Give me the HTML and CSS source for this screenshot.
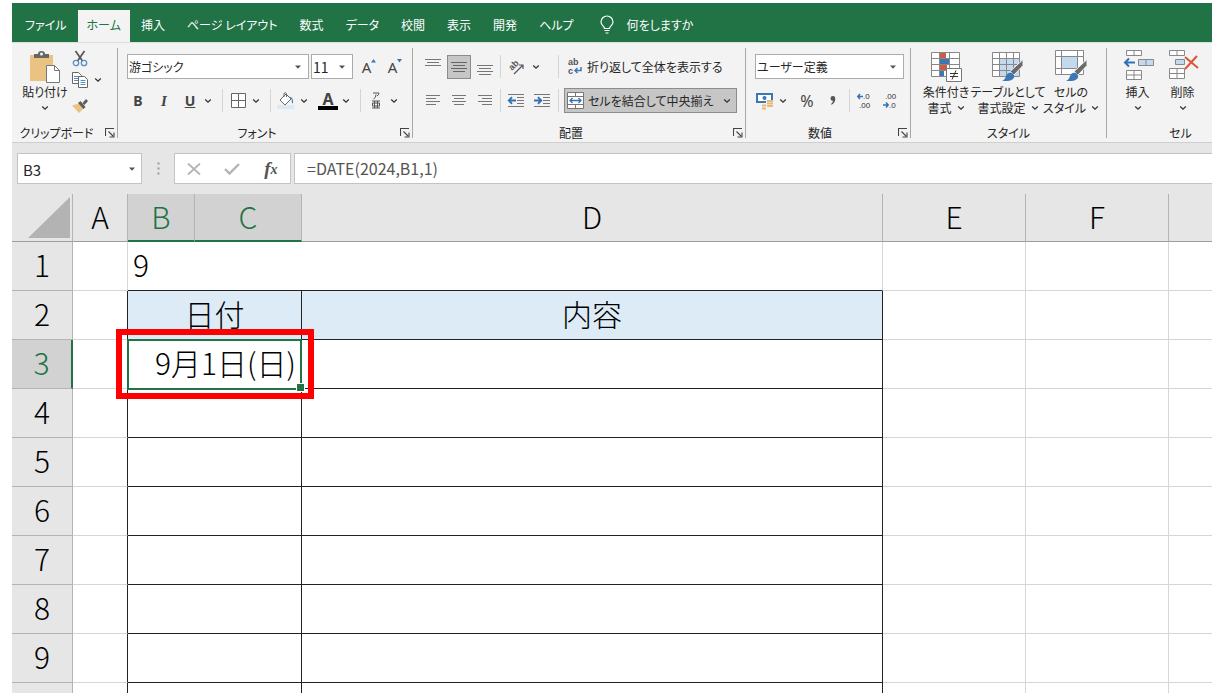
FILE: index.html
```html
<!DOCTYPE html>
<html lang="ja">
<head>
<meta charset="utf-8">
<title>B3 - 表計算</title>
<link rel="stylesheet" href="styles.css">
</head>
<body>
<svg class="defs" aria-hidden="true">
  <symbol id="chev" viewBox="0 0 8 8"><path d="M1.2 2.6 4 5.2 6.8 2.6" fill="none" stroke="#333" stroke-width="1.3"/></symbol>
  <symbol id="tri" viewBox="0 0 8 8"><path d="M1 2.5h6L4 5.8z" fill="#555"/></symbol>
  <symbol id="launch" viewBox="0 0 10 10"><path d="M.5 8V.5H9M3.5 3.5 8 8M4.5 9h4.5V4.5" fill="none" stroke="#444" stroke-width="1.1"/></symbol>
</svg>
<div class="app">
  <nav class="tabs">
    <button class="tab">ファイル</button>
    <button class="tab active">ホーム</button>
    <button class="tab">挿入</button>
    <button class="tab">ページ レイアウト</button>
    <button class="tab">数式</button>
    <button class="tab">データ</button>
    <button class="tab">校閲</button>
    <button class="tab">表示</button>
    <button class="tab">開発</button>
    <button class="tab">ヘルプ</button>
    <button class="tab tell">
      <svg width="14" height="18" viewBox="0 0 14 18"><path d="M4.5 12.5C4.5 10 1 9.500 1 6a6 6 0 0 1 12 0c0 3.500-3.500 4-3.500 6.500zM4.500 14.500h5M5.500 17h3" fill="none" stroke="#fff" stroke-width="1.2"/></svg>
      <span>何をしますか</span>
    </button>
  </nav>

  <div class="ribbon">
    <section class="group clipboard">
      <div class="body side">
        <button class="big paste">
          <svg width="32" height="34" viewBox="0 0 32 34"><path d="M1 5h23v26H1z" fill="#eac282"/><path d="M5 4h4q0-3 3.500-3T16 4h4v4H5z" fill="#666"/><circle cx="12.500" cy="4" r="1.500" fill="#f3f3f3"/><path d="M17.500 15.500h8l5 5v12h-13z" fill="#fff" stroke="#777"/><path d="M25.500 15.500v5h5" fill="none" stroke="#777"/></svg>
          <span>貼り付け</span>
          <svg class="chev"><use href="#chev"/></svg>
        </button>
        <div class="stack">
          <button class="icon cut" aria-label="切り取り"><svg width="16" height="17" viewBox="0 0 16 17"><path d="M3.500 1 10.500 11M12.500 1 5.500 11" stroke="#555" stroke-width="1.700"/><circle cx="4" cy="13" r="2.700" fill="none" stroke="#5b8fc0" stroke-width="1.300"/><circle cx="12" cy="13" r="2.700" fill="none" stroke="#5b8fc0" stroke-width="1.300"/></svg></button>
          <span class="split">
            <button class="icon" aria-label="コピー"><svg width="16" height="16" viewBox="0 0 16 16"><path d="M.5.5h6l3 3v8h-9z" fill="#fff" stroke="#666"/><path d="M2 4.500h5M2 6.500h5M2 8.500h5" stroke="#5b8fc0"/><path d="M6.500 4.500h6l3 3v8h-9z" fill="#fff" stroke="#666"/><path d="M8.500 8.500h5M8.500 10.500h5M8.500 12.500h5" stroke="#5b8fc0"/></svg></button>
            <button class="more" aria-label="コピーのオプション"><svg class="chev"><use href="#chev"/></svg></button>
          </span>
          <button class="icon" aria-label="書式のコピー"><svg width="16" height="14" viewBox="0 0 16 14"><path d="m0 6.500 7-2 4.500 5L7 14z" fill="#eac282"/><path d="m6 4 2.500-2 5 6-2 2zM10.500 4l3.500-4 2 2-3.500 4z" fill="#5c5c5c"/></svg></button>
        </div>
      </div>
      <div class="label"><span>クリップボード</span><button class="launcher" aria-label="クリップボードの詳細"><svg width="10" height="10"><use href="#launch"/></svg></button></div>
    </section>

    <section class="group font">
      <div class="body">
        <div class="row fields">
          <span class="pick name"><select aria-label="フォント名"><option>游ゴシック</option></select><svg class="tri"><use href="#tri"/></svg></span>
          <span class="pick size"><select aria-label="フォント サイズ"><option>11</option></select><svg class="tri"><use href="#tri"/></svg></span>
          <button class="icon grow first" aria-label="拡大">A<svg width="5" height="4" viewBox="0 0 5 4"><path d="M0 3.500 2.500 0 5 3.500z" fill="#3b78b5"/></svg></button>
          <button class="icon grow" aria-label="縮小">A<svg width="5" height="4" viewBox="0 0 5 4"><path d="M0 0 2.500 3.500 5 0z" fill="#3b78b5"/></svg></button>
        </div>
        <div class="row">
          <button class="icon bold">B</button>
          <button class="icon italic">I</button>
          <span class="split"><button class="icon under">U</button><button class="more" aria-label="下線"><svg class="chev"><use href="#chev"/></svg></button></span>
          <i class="sep"></i>
          <span class="split"><button class="icon" aria-label="罫線"><svg width="15" height="15" viewBox="0 0 15 15"><path d="M.5.5h14v14H.5zM7.500.5v14M.5 7.500h14" fill="#fff" stroke="#666"/></svg></button><button class="more" aria-label="罫線の種類"><svg class="chev"><use href="#chev"/></svg></button></span>
          <i class="sep"></i>
          <span class="split"><button class="icon" aria-label="塗りつぶしの色"><svg width="18" height="18" viewBox="0 0 18 18"><path d="M0 13h17v4H0z" fill="#dbe9f5"/><path d="m3 8 6-6 5 5-6 6zM7 5V1.500q1.500-1.500 2.500 0V5" fill="#fff" stroke="#666"/><path d="M12.500 4.500q4 .5 3.500 7-2-1-1-3.500z" fill="#3f7dba"/></svg></button><button class="more" aria-label="色の選択"><svg class="chev"><use href="#chev"/></svg></button></span>
          <span class="split"><button class="icon color" aria-label="フォントの色">A</button><button class="more" aria-label="文字色の選択"><svg class="chev"><use href="#chev"/></svg></button></span>
          <i class="sep"></i>
          <span class="split"><button class="icon ruby" aria-label="ふりがな"><svg width="10" height="17" viewBox="0 0 10 17"><path d="M2 1h6Q8 3 6 4M5 2.500Q5 6 2.500 7" fill="none" stroke="#555"/><path d="M1 9h8M1 16h8M3.500 9v7M6.500 9v7M1.500 11h7v3h-7z" fill="none" stroke="#555"/></svg></button><button class="more" aria-label="ふりがなの設定"><svg class="chev"><use href="#chev"/></svg></button></span>
        </div>
      </div>
      <div class="label"><span>フォント</span><button class="launcher" aria-label="フォントの詳細"><svg width="10" height="10"><use href="#launch"/></svg></button></div>
    </section>

    <section class="group align">
      <div class="body">
        <div class="row">
          <button class="icon" aria-label="上揃え"><svg width="16" height="16" viewBox="0 0 16 16"><path d="M0 .5h16M2 3.500h12M0 6.500h16" stroke="#777"/></svg></button>
          <button class="icon on" aria-label="上下中央揃え"><svg width="16" height="16" viewBox="0 0 16 16"><path d="M0 3.500h16M2 6.500h12M0 9.500h16M2 12.500h12" stroke="#666"/></svg></button>
          <button class="icon" aria-label="下揃え"><svg width="16" height="16" viewBox="0 0 16 16"><path d="M0 6.500h16M2 9.500h12M0 12.500h16M2 15.500h12" stroke="#777"/></svg></button>
          <i class="sep"></i>
          <span class="split orient"><button class="icon" aria-label="方向"><svg width="18" height="18" viewBox="0 0 18 18"><text transform="translate(5 13) rotate(-45)" class="glyph">ab</text><path d="M7 16 16 7M12 7H16v4" fill="none" stroke="#555" stroke-width="1.200"/></svg></button><button class="more" aria-label="方向の選択"><svg class="chev"><use href="#chev"/></svg></button></span>
          <i class="sep wide"></i>
          <button class="wrap"><svg width="16" height="17" viewBox="0 0 16 17"><text x="1" y="7" class="glyph">ab</text><text x="1" y="16" class="glyph">c</text><path d="M14 9v3.500H8M10.500 10 8 12.500l2.500 2.500" fill="none" stroke="#3b78b5" stroke-width="1.500"/></svg><span>折り返して全体を表示する</span></button>
        </div>
        <div class="row">
          <button class="icon" aria-label="左揃え"><svg width="14" height="11" viewBox="0 0 14 11"><path d="M0 .5h14M0 3.500h10M0 6.500h14M0 9.500h10" stroke="#777"/></svg></button>
          <button class="icon" aria-label="中央揃え"><svg width="14" height="11" viewBox="0 0 14 11"><path d="M0 .5h14M2 3.500h10M0 6.500h14M2 9.500h10" stroke="#777"/></svg></button>
          <button class="icon" aria-label="右揃え"><svg width="14" height="11" viewBox="0 0 14 11"><path d="M0 .5h14M4 3.500h10M0 6.500h14M4 9.500h10" stroke="#777"/></svg></button>
          <i class="sep"></i>
          <button class="icon" aria-label="インデントを減らす"><svg width="16" height="14" viewBox="0 0 16 14"><path d="M0 .5h16M9 3.500h7M9 6.500h7M9 9.500h7M0 12.500h16" stroke="#777"/><path d="M8 6.500H1M4 3.200.8 6.500 4 9.800" fill="none" stroke="#3073b5" stroke-width="1.900"/></svg></button>
          <button class="icon" aria-label="インデントを増やす"><svg width="16" height="14" viewBox="0 0 16 14"><path d="M0 .5h16M9 3.500h7M9 6.500h7M9 9.500h7M0 12.500h16" stroke="#777"/><path d="M0 6.500h7M4 3.200l3.200 3.300L4 9.800" fill="none" stroke="#3073b5" stroke-width="1.900"/></svg></button>
          <i class="sep wide"></i>
          <button class="merge"><svg width="17" height="17" viewBox="0 0 17 17"><path d="M.5.5h16v16H.5zM.5 4.500h16M.5 12.500h16M8.500.5v4M8.500 12.500v4" fill="#fff" stroke="#777"/><path d="M3 8.500h11M5.500 6 3 8.500 5.500 11M11.500 6 14 8.500 11.500 11" fill="none" stroke="#3073b5" stroke-width="1.300"/></svg><span>セルを結合して中央揃え</span><svg class="chev"><use href="#chev"/></svg></button>
        </div>
      </div>
      <div class="label"><span>配置</span><button class="launcher" aria-label="配置の詳細"><svg width="10" height="10"><use href="#launch"/></svg></button></div>
    </section>

    <section class="group number">
      <div class="body">
        <div class="row fields">
          <span class="pick format"><select aria-label="表示形式"><option>ユーザー定義</option></select><svg class="tri"><use href="#tri"/></svg></span>
        </div>
        <div class="row">
          <span class="split"><button class="icon" aria-label="通貨"><svg width="18" height="18" viewBox="0 0 18 18"><path d="M1 2h15v8H1z" fill="#fff" stroke="#3b78b5" stroke-width="2"/><circle cx="8.500" cy="6" r="2" fill="#3b78b5"/><path d="M10 8h7v9h-5v1H6v-6h4z" fill="#f3f3f3"/><path d="M11 9h6M11 11.500h6M11 14h6M6 13.500h4M6 16.500h4" stroke="#e5b97a" stroke-width="2"/></svg></button><button class="more" aria-label="通貨の選択"><svg class="chev"><use href="#chev"/></svg></button></span>
          <button class="icon percent">%</button>
          <button class="icon" aria-label="桁区切り"><svg width="6" height="9" viewBox="0 0 6 9"><path d="M.5 2.500a2.300 2.300 0 0 1 4.800 0Q5.300 7 1.500 8.800L1 8q2-1.500 2-3.300A2.300 2.300 0 0 1 .5 2.500z" fill="#555"/></svg></button>
          <i class="sep"></i>
          <button class="icon" aria-label="小数点以下を増やす"><svg width="16" height="16" viewBox="0 0 16 16"><text x="6" y="6" class="num">.0</text><text x="2" y="15" class="num">.00</text><path d="M6 3.500H1M3 1 .8 3.500 3 6" fill="none" stroke="#3073b5" stroke-width="1.500"/></svg></button>
          <button class="icon" aria-label="小数点以下を減らす"><svg width="16" height="16" viewBox="0 0 16 16"><text x="2" y="6" class="num">.00</text><text x="6" y="15" class="num">.0</text><path d="M0 12h5M3 9.500 5.200 12 3 14.500" fill="none" stroke="#3073b5" stroke-width="1.500"/></svg></button>
        </div>
      </div>
      <div class="label"><span>数値</span><button class="launcher" aria-label="数値の詳細"><svg width="10" height="10"><use href="#launch"/></svg></button></div>
    </section>

    <section class="group styles">
      <div class="body side">
        <button class="big cond">
          <svg width="32" height="32" viewBox="0 0 32 32"><path d="M1.500 2.500h28v24h-28z" fill="#fff"/><path d="M10 2h6v6h-6zM10 14h7v6h-7z" fill="#d35a3c"/><path d="M10 8h9v6h-9zM10 20h4v6h-4z" fill="#3b78b5"/><path d="M1.500 2.500h28v24h-28zM1.500 8.500h28M1.500 14.500h28M1.500 20.500h28M9.500 2.500v24M19.500 2.500v24" fill="none" stroke="#888"/><path d="M16.500 18.500h15v13h-15z" fill="#fff" stroke="#777"/><path d="M20 23.500h8M20 26.500h8M26 20.500l-4 9" stroke="#333"/></svg>
          <span>条件付き</span><span class="line">書式<svg class="chev"><use href="#chev"/></svg></span>
        </button>
        <button class="big table">
          <svg width="34" height="32" viewBox="0 0 34 32"><path d="M1.500 2.500h27v24h-27z" fill="#fff"/><path d="M8 8h21v18H8z" fill="#c3d9ee"/><path d="M1.500 2.500h27v24h-27zM1.500 8.500h27M1.500 14.500h27M1.500 20.500h27M8.500 2.500v24M15.500 2.500v24M22.500 2.500v24" fill="none" stroke="#888"/><path d="M32 9.500v6L23 25l-4-3.500z" fill="#6a6a6a" stroke="#f3f3f3"/><path d="M11 31q3-1 4-5 2-4.500 6-3 3.500 2.500 1.500 5.500-2 3-11.500 2.500z" fill="#3b78b5"/></svg>
          <span>テーブルとして</span><span class="line">書式設定<svg class="chev"><use href="#chev"/></svg></span>
        </button>
        <button class="big cell">
          <svg width="34" height="32" viewBox="0 0 34 32"><path d="M1.500.5h28v24h-28z" fill="#fff"/><path d="M8 7h15v11H8z" fill="#c3d9ee"/><path d="M1.500.5h28v24h-28zM1.500 6.500h28M1.500 18.500h28M7.500.5v24M23.500.5v24" fill="none" stroke="#888"/><path d="M33 9.500v6L24 25l-4-3.500z" fill="#6a6a6a" stroke="#f3f3f3"/><path d="M12 31q3-1 4-5 2-4.500 6-3 3.500 2.500 1.500 5.500-2 3-11.500 2.500z" fill="#3b78b5"/></svg>
          <span>セルの</span><span class="line">スタイル<svg class="chev"><use href="#chev"/></svg></span>
        </button>
      </div>
      <div class="label"><span>スタイル</span></div>
    </section>

    <section class="group cells">
      <div class="body side">
        <button class="big edit">
          <svg width="32" height="32" viewBox="0 0 32 32"><path d="M4.500.5h15v5h-15zM12 .5v5M4.500 20.500h15v9h-15zM12 20.500v9M4.500 25h15" fill="#fff" stroke="#888"/><path d="M16.500 9.500h15v6h-15zM24 9.500v6" fill="#c3d9ee" stroke="#888"/><path d="M13 12.500H2.500M7 8.500l-4 4 4 4" fill="none" stroke="#3073b5" stroke-width="2"/></svg>
          <span>挿入</span><svg class="chev"><use href="#chev"/></svg>
        </button>
        <button class="big edit">
          <svg width="32" height="32" viewBox="0 0 32 32"><path d="M2.500.5h15v5h-15zM10 .5v5M2.500 18.500h15v10h-15zM10 18.500v10M2.500 23.500h15" fill="#fff" stroke="#888"/><path d="M8.500 9.500h9v5h-9z" fill="#c3d9ee" stroke="#888"/><path d="m18 7 13 11M30 6 18 19" stroke="#d8573a" stroke-width="2"/></svg>
          <span>削除</span><svg class="chev"><use href="#chev"/></svg>
        </button>
      </div>
      <div class="label"><span>セル</span></div>
    </section>
  </div>

  <div class="formula-bar">
    <div class="name-box"><input aria-label="名前ボックス" value="B3"><button aria-label="名前の一覧"><svg class="tri"><use href="#tri"/></svg></button></div>
    <svg class="dots" width="3" height="13" viewBox="0 0 3 13"><path d="M.5.500h2v2h-2zM.5 5.500h2v2h-2zM.5 10.500h2v2h-2z" fill="#999"/></svg>
    <div class="entry">
      <button aria-label="キャンセル"><svg width="14" height="12" viewBox="0 0 14 12"><path d="M1 .5 13 11.500M13 .5 1 11.500" stroke="#b5b5b5" stroke-width="1.700"/></svg></button>
      <button aria-label="入力"><svg width="16" height="12" viewBox="0 0 16 12"><path d="m1 6 4.500 4.500L15 1" fill="none" stroke="#b5b5b5" stroke-width="2.400"/></svg></button>
      <button class="fx" aria-label="関数の挿入">f<small>x</small></button>
    </div>
    <input class="formula" aria-label="数式バー" value="=DATE(2024,B1,1)">
  </div>

  <div class="sheet">
    <table>
      <colgroup><col class="c-head"><col class="c-a"><col class="c-b"><col class="c-c"><col class="c-d"><col class="c-e"><col class="c-e"><col></colgroup>
      <thead>
        <tr><th class="corner"><svg width="42" height="41" viewBox="0 0 42 41"><path d="M42 0v41H0z" fill="#b3b3b3"/></svg></th><th>A</th><th class="sel">B</th><th class="sel">C</th><th>D</th><th>E</th><th>F</th><th></th></tr>
      </thead>
      <tbody>
        <tr><th>1</th><td></td><td class="above" colspan="3">9</td><td></td><td></td><td></td></tr>
        <tr><th>2</th><td class="edge"></td><td class="box head" colspan="2">日付</td><td class="box head">内容</td><td></td><td></td><td></td></tr>
        <tr><th class="sel">3</th><td class="edge"></td><td class="box date" colspan="2">9月1日(日)<span class="cursor"></span><span class="mark"></span></td><td class="box"></td><td></td><td></td><td></td></tr>
        <tr><th>4</th><td class="edge"></td><td class="box" colspan="2"></td><td class="box"></td><td></td><td></td><td></td></tr>
        <tr><th>5</th><td class="edge"></td><td class="box" colspan="2"></td><td class="box"></td><td></td><td></td><td></td></tr>
        <tr><th>6</th><td class="edge"></td><td class="box" colspan="2"></td><td class="box"></td><td></td><td></td><td></td></tr>
        <tr><th>7</th><td class="edge"></td><td class="box" colspan="2"></td><td class="box"></td><td></td><td></td><td></td></tr>
        <tr><th>8</th><td class="edge"></td><td class="box" colspan="2"></td><td class="box"></td><td></td><td></td><td></td></tr>
        <tr><th>9</th><td class="edge"></td><td class="box" colspan="2"></td><td class="box"></td><td></td><td></td><td></td></tr>
        <tr><th></th><td class="edge"></td><td class="box" colspan="2"></td><td class="box"></td><td></td><td></td><td></td></tr>
      </tbody>
    </table>
  </div>
</div>
</body>
</html>
```
FILE: styles.css
```css
* { box-sizing: border-box; }
body {
  margin: 0;
  height: 100vh;
  padding: 3px 10px 5px 12px;
  background: #fff;
  color: #262626;
  font: 12px/16px "Noto Sans CJK JP", sans-serif;
  font-feature-settings: "palt";
}
button, select, input { font: inherit; font-feature-settings: inherit; color: inherit; }
button { padding: 0; border: 0; background: none; }
svg { display: block; flex: none; overflow: visible; }
.defs { position: absolute; width: 0; height: 0; }
.app { height: 100%; display: flex; flex-direction: column; overflow: hidden; }

.tabs { flex: none; height: 39px; padding: 7px 0 0 2px; display: flex; background: #217346; }
.tab { padding: 0 11px 2px; color: #fff; white-space: nowrap; }
.tab.active { background: #f3f3f3; color: #217346; padding: 0 9px 2px; }
.tell { display: flex; align-items: center; gap: 13px; padding-left: 15px; }

.ribbon { flex: none; height: 101px; padding-top: 5px; display: flex; background: #f3f3f3; border-top: 1px solid #d5e3da; border-bottom: 1px solid #cfcfcf; overflow: hidden; }
.group { flex: none; height: 94px; display: flex; flex-direction: column; padding-right: 1px; background: linear-gradient(#a8a8a8, #a8a8a8) right top / 1px 90px no-repeat; }
.clipboard { width: 106px; }
.font { width: 295px; }
.align { width: 333px; }
.number { width: 165px; }
.styles { width: 196px; }
.cells { width: 148px; }
.body { flex: 1; padding: 6px 0 0 9px; display: flex; flex-direction: column; gap: 9px; }
.body.side { flex-direction: row; padding: 2px 8px 0; gap: 0; }
.row { height: 25px; display: flex; align-items: center; gap: 6px; }
.font .row:not(.fields) { padding-left: 1px; }
.label { flex: none; height: 18px; display: flex; align-items: center; line-height: 18px; }
.label span { flex: 1; text-align: center; }
.launcher { width: 16px; padding-left: 4px; }

.icon { width: 20px; height: 24px; flex: none; display: flex; align-items: center; justify-content: center; color: #444; }
.more { width: 16px; height: 24px; display: flex; align-items: center; justify-content: center; }
.split { display: flex; flex: none; }
.chev { width: 8px; height: 8px; }
.tri { width: 8px; height: 8px; }
.sep { width: 1px; height: 23px; margin-right: -1px; background: #d4d4d4; flex: none; }

.big { flex: none; display: flex; flex-direction: column; align-items: center; white-space: nowrap; }
.big > svg:first-child { margin-bottom: 2px; }
.big > .chev { margin-top: 4px; }
.line { display: flex; align-items: center; gap: 5px; }
.paste { width: 50px; }
.body .paste > svg:first-child { margin-bottom: 0; }
.stack { display: flex; flex-direction: column; gap: 2px; }
.cut { height: 16px; }

.pick { flex: none; height: 25px; display: grid; grid-template-columns: 1fr 14px; align-items: center; background: #fff; border: 1px solid #ababab; }
.pick select { grid-area: 1 / 1 / 2 / 3; width: 100%; height: 23px; padding: 0 1px; border: 0; background: none; appearance: none; }
.pick svg { grid-area: 1 / 2 / 2 / 3; }
.fields { gap: 2px; }
.name { width: 182px; }
.size { width: 42px; }
.size select { font-size: 14px; }
.format { width: 149px; }
.grow { width: 24px; font: 15px/16px "Noto Sans", sans-serif; }
.grow.first { margin-left: 2px; }
.grow svg { align-self: flex-start; margin-top: 4px; }
.bold { font: bold 14px/16px "Noto Sans", sans-serif; }
.italic { font: italic bold 15px/16px "Liberation Serif", serif; }
.under { font: bold 14px/16px "Noto Sans", sans-serif; text-decoration: underline; }
.color { height: 18px; margin-top: 3px; font: bold 16px/14px "Noto Sans", sans-serif; border-bottom: 4px solid #000; }

.align .row { gap: 2px; }
.align .body { padding-left: 8px; }
.align .icon { width: 24px; }
.align .on { background: #c6c6c6; border: 1px solid #8c8c8c; }
.align .sep { margin: 0 1px; }
.align .sep.wide { margin: 0 3px 0 2px; }
.orient { width: 50px; }
.wrap { display: flex; align-items: center; gap: 4px; padding-left: 3px; white-space: nowrap; }
.merge { width: 173px; height: 25px; flex: none; display: flex; align-items: center; gap: 4px; padding: 0 5px 0 2px; background: #c6c6c6; border: 1px solid #8c8c8c; white-space: nowrap; }
.merge span { flex: 1; text-align: left; }
.glyph { font: bold 9px "Liberation Sans", sans-serif; fill: #555; }
.num { font: 8px "Liberation Sans", sans-serif; fill: #333; }
.percent { font: 16px/16px "Noto Sans", sans-serif; }

.cond { width: 54px; }
.table { width: 70px; }
.cell { width: 56px; }
.edit { width: 45px; }

.formula-bar { flex: none; height: 51px; padding: 10px 0 10px 5px; display: flex; align-items: stretch; background: #e6e6e6; }
.name-box, .entry, .formula { border: 1px solid #c3c3c3; background: #fff; }
.name-box { width: 125px; display: flex; }
.name-box input { flex: 1; min-width: 0; padding: 2px 5px 0; border: 0; font-size: 15px; background: none; }
.name-box button { width: 18px; display: flex; align-items: center; justify-content: center; }
.dots { margin: 9px 14px 0 15px; }
.entry { width: 117px; display: flex; }
.entry button { flex: 1; display: flex; align-items: center; justify-content: center; }
.entry .fx { font: italic bold 19px/20px "Liberation Serif", serif; color: #555; }
.fx small { font-size: 14px; align-self: flex-end; padding-bottom: 3px; }
.formula { flex: 1; min-width: 0; margin-left: 3px; padding: 0 12px 2px; border-right: 0; font-size: 16px; color: #555; }

.sheet { flex: 1; min-height: 0; overflow: hidden; background: #fff; }
table { width: 100%; table-layout: fixed; border-collapse: separate; border-spacing: 0; color: #000; font-size: 30px; line-height: 40px; font-weight: 300; font-feature-settings: normal; }
.c-head { width: 61px; }
.c-a { width: 55px; }
.c-b { width: 67px; }
.c-c { width: 107px; }
.c-d { width: 581px; }
.c-e { width: 143px; }
th { padding: 0 0 5px; background: #e6e6e6; font-weight: 300; border-right: 1px solid #b4b4b4; border-bottom: 1px solid #b4b4b4; }
thead th { height: 48px; padding-bottom: 4px; border-bottom-color: #9e9e9e; }
thead th:last-child { border-right: 0; }
thead th.sel { padding-bottom: 3px; background: #d2d2d2; color: #217346; border-bottom: 2px solid #217346; }
thead .corner { padding-bottom: 0; }
.corner svg { margin-left: 16px; }
tbody th { height: 49px; }
tbody th.sel { background: #d2d2d2; color: #217346; border-right: 2px solid #217346; }
td { height: 49px; padding: 0 0 5px; border-right: 1px solid #d6d6d6; border-bottom: 1px solid #d6d6d6; }
td:last-child { border-right: 0; }
.above { padding-left: 5px; border-bottom-color: #222; }
.edge { border-right-color: #222; }
.box { border-color: #222; text-align: center; }
.head { background: #ddebf7; }
.date { position: relative; text-align: right; padding-right: 5px; }
.cursor { position: absolute; inset: -1px -1px -2px -1px; border: 2px solid #217346; }
.cursor::after { content: ""; position: absolute; right: -5px; bottom: -4px; width: 7px; height: 7px; background: #217346; border: 1px solid #fff; }
.mark { position: absolute; inset: -11px -13px -11px -12px; border: 6px solid #f00; }
```
